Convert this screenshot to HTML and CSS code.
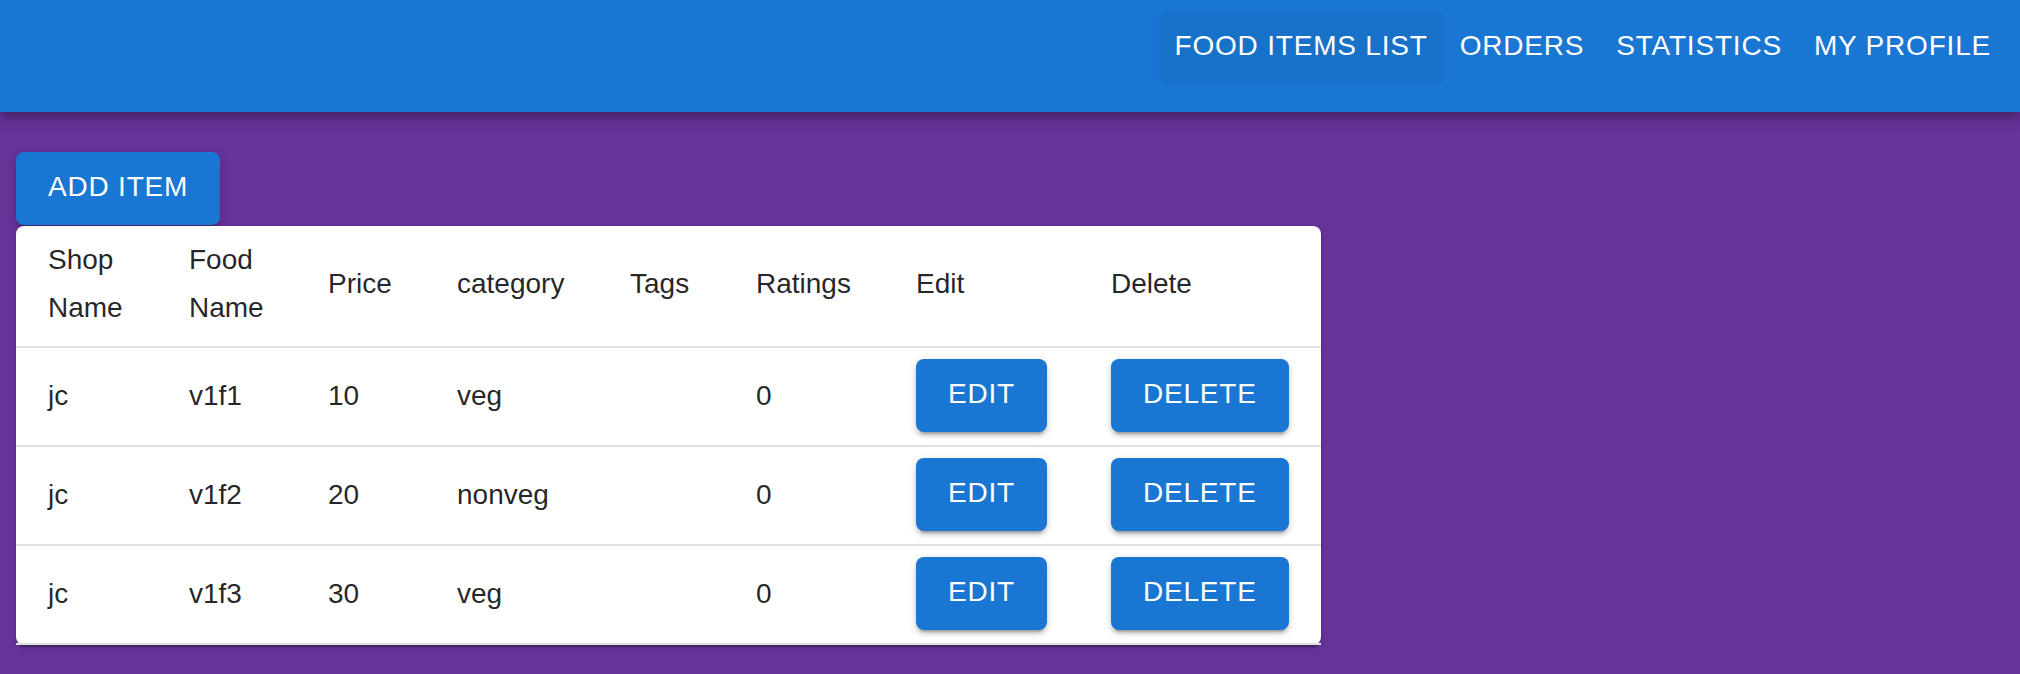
FILE: index.html
```html
<!DOCTYPE html>
<html>
<head>
<meta charset="utf-8">
<link rel="stylesheet" href="styles.css">
</head>
<body>
<header class="appbar">
  <nav class="toolbar">
    <button class="nav-btn active">FOOD ITEMS LIST</button>
    <button class="nav-btn">ORDERS</button>
    <button class="nav-btn">STATISTICS</button>
    <button class="nav-btn">MY PROFILE</button>
  </nav>
</header>
<main class="content">
  <button class="btn">ADD ITEM</button>
  <div class="card">
    <table class="table">
      <colgroup>
        <col class="c-shop"><col class="c-food"><col class="c-price"><col class="c-cat"><col class="c-tags"><col class="c-rate"><col class="c-edit"><col class="c-del">
      </colgroup>
      <thead>
        <tr>
          <th>Shop Name</th><th>Food Name</th><th>Price</th><th>category</th><th>Tags</th><th>Ratings</th><th>Edit</th><th>Delete</th>
        </tr>
      </thead>
      <tbody>
        <tr>
          <td>jc</td><td>v1f1</td><td>10</td><td>veg</td><td></td><td>0</td>
          <td><button class="btn">EDIT</button></td><td><button class="btn">DELETE</button></td>
        </tr>
        <tr>
          <td>jc</td><td>v1f2</td><td>20</td><td>nonveg</td><td></td><td>0</td>
          <td><button class="btn">EDIT</button></td><td><button class="btn">DELETE</button></td>
        </tr>
        <tr>
          <td>jc</td><td>v1f3</td><td>30</td><td>veg</td><td></td><td>0</td>
          <td><button class="btn">EDIT</button></td><td><button class="btn">DELETE</button></td>
        </tr>
      </tbody>
    </table>
  </div>
</main>
</body>
</html>
```
FILE: styles.css
```css
html, body {
  margin: 0;
  padding: 0;
}
body {
  background: #663399;
  font-family: "Liberation Sans", Arial, Helvetica, sans-serif;
  min-height: 674px;
}
.appbar {
  background: #1976d2;
  height: 112px;
  box-shadow: 0 4px 8px -2px rgba(0,0,0,0.2), 0 8px 10px 0 rgba(0,0,0,0.14), 0 2px 20px 0 rgba(0,0,0,0.12);
  position: relative;
  z-index: 2;
}
.toolbar {
  display: flex;
  justify-content: flex-end;
  align-items: flex-start;
  padding: 12px 13px 0 0;
}
.nav-btn {
  font-family: inherit;
  font-size: 28px;
  line-height: 48px;
  letter-spacing: 0.8px;
  color: #fff;
  background: transparent;
  border: none;
  border-radius: 8px;
  padding: 10px 16px 14px;
  margin: 0;
  cursor: pointer;
}
.nav-btn.active {
  background: rgba(0,0,0,0.04);
}
.content {
  padding: 40px 16px 0 16px;
  display: flex;
  flex-direction: column;
  align-items: flex-start;
}
.btn {
  font-family: inherit;
  font-size: 28px;
  line-height: 49px;
  letter-spacing: 0.8px;
  color: #fff;
  background: #1976d2;
  border: none;
  border-radius: 8px;
  padding: 10px 32px 14px;
  min-width: 128px;
  margin: 0;
  box-shadow: 0 6px 2px -4px rgba(0,0,0,0.2), 0 4px 4px 0 rgba(0,0,0,0.14), 0 2px 10px 0 rgba(0,0,0,0.12);
  cursor: pointer;
}
.card {
  background: #fff;
  border-radius: 8px;
  width: 1305px;
  box-shadow: 0 4px 2px -2px rgba(0,0,0,0.2), 0 2px 2px 0 rgba(0,0,0,0.14), 0 2px 6px 0 rgba(0,0,0,0.12);
  margin-top: 1px;
}
.table {
  width: 1305px;
  table-layout: fixed;
  border-collapse: collapse;
  border-spacing: 0;
}
.c-shop { width: 141px; }
.c-food { width: 139px; }
.c-price { width: 129px; }
.c-cat { width: 173px; }
.c-tags { width: 126px; }
.c-rate { width: 160px; }
.c-edit { width: 195px; }
.c-del { width: 242px; }
.table th, .table td {
  text-align: left;
  font-size: 28px;
  font-weight: 400;
  color: rgba(0,0,0,0.87);
  border-bottom: 2px solid #e0e0e0;
  vertical-align: middle;
}
.table th {
  line-height: 48px;
  padding: 10px 32px 14px;
}
.table td {
  line-height: 40px;
  padding: 11px 32px 13px;
}
```
